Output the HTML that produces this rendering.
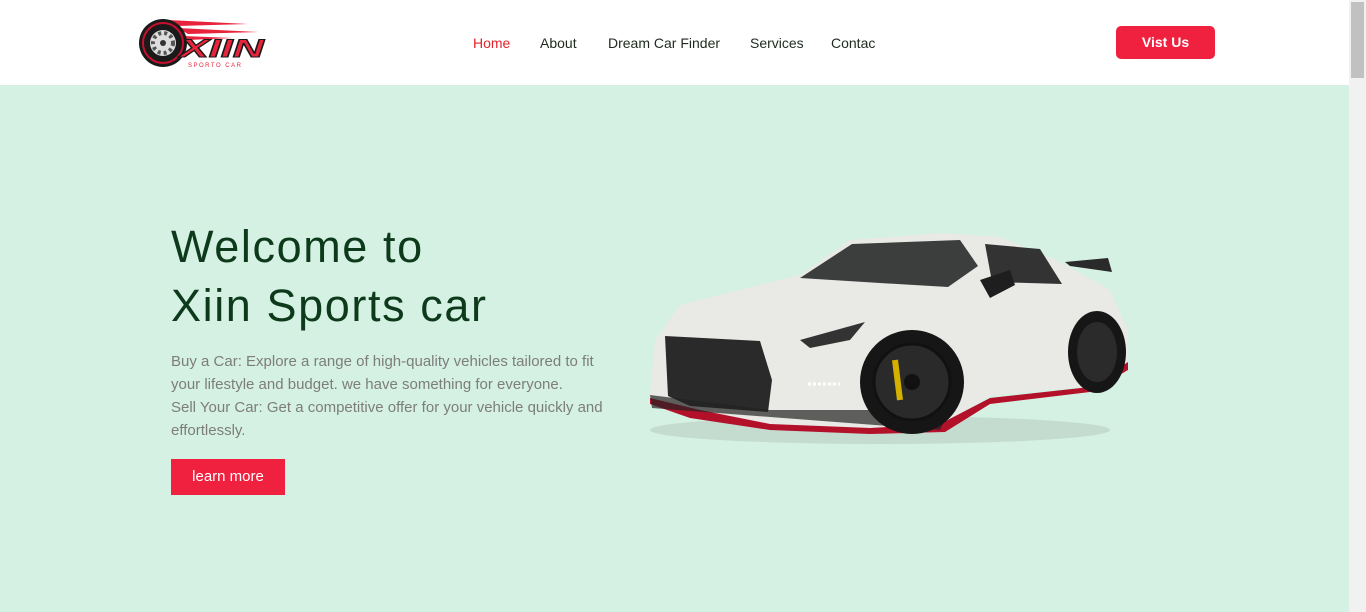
<!DOCTYPE html>
<html><head><meta charset="utf-8"><style>
*{margin:0;padding:0;box-sizing:border-box}
body{width:1366px;height:612px;overflow:hidden;background:#d5f1e3;font-family:"Liberation Sans",sans-serif;position:relative}
header{position:absolute;left:0;top:0;width:1349px;height:85px;background:#fff}
.nav{position:absolute;top:35px;font-size:14px;color:#1f2a1f}
.nav span{position:absolute;white-space:nowrap}
.visit{position:absolute;left:1116px;top:26px;width:99px;height:33px;background:#f0213f;border-radius:5px;color:#fff;font-weight:bold;font-size:14px;text-align:center;line-height:33px}
.sb{position:absolute;left:1349px;top:0;width:17px;height:612px;background:#f1f1f1}
.sb div{position:absolute;left:2px;top:2px;width:13px;height:76px;background:#c1c1c1}
h1{position:absolute;left:171px;top:217px;font-weight:normal;font-size:45px;line-height:59px;color:#0e3a1c;letter-spacing:1.6px}
p{position:absolute;left:171px;top:350px;width:450px;font-size:15px;line-height:23px;color:#7d7d7d}
.btn{position:absolute;left:171px;top:459px;width:114px;height:36px;background:#f0213f;color:#fff;font-size:15px;text-align:center;line-height:36px}
</style></head><body>
<header>
<svg style="position:absolute;left:138px;top:14px" width="130" height="58" viewBox="0 0 130 58">
<path d="M30 6 L110 10 L40 12Z" fill="#e8243c"/><path d="M40 14 L120 18 L50 20Z" fill="#e8243c"/><path d="M45 22 L95 24 L50 26Z" fill="#e8243c"/>
<circle cx="25" cy="29" r="24" fill="#1a1a1a"/><circle cx="25" cy="29" r="20" fill="none" stroke="#c8102e" stroke-width="2"/>
<circle cx="25" cy="29" r="13" fill="#ddd"/><circle cx="25" cy="29" r="10" fill="none" stroke="#555" stroke-width="4" stroke-dasharray="3 3"/><circle cx="25" cy="29" r="3" fill="#333"/>
<text x="42" y="43" font-family="Liberation Sans" font-weight="bold" font-style="italic" font-size="25" textLength="84" lengthAdjust="spacingAndGlyphs" fill="#e8243c" stroke="#1a1a1a" stroke-width="1">XIIN</text>
<text x="50" y="53" font-family="Liberation Sans" font-size="6" fill="#e8243c" letter-spacing="1.5">SPORTO CAR</text>
</svg>
<div class="nav"><span style="left:473px;color:#e3242b">Home</span><span style="left:540px">About</span><span style="left:608px">Dream Car Finder</span><span style="left:750px">Services</span><span style="left:831px">Contac</span></div>
<div class="visit">Vist Us</div>
</header>
<div class="sb"><div></div></div>
<h1>Welcome to<br>Xiin Sports car</h1>
<p>Buy a Car: Explore a range of high-quality vehicles tailored to fit your lifestyle and budget. we have something for everyone.<br>Sell Your Car: Get a competitive offer for your vehicle quickly and effortlessly.</p>
<div class="btn">learn more</div>
<svg style="position:absolute;left:0;top:0" width="1349" height="612">
<ellipse cx="880" cy="430" rx="230" ry="14" fill="#b8cfc2" opacity=".6"/>
<path d="M1065 262 L1108 258 L1112 272 L1070 266Z" fill="#2a2a2a"/>
<path d="M655 340 L680 305 L760 285 L800 275 L850 240 L940 233 L1000 237 L1060 262 L1110 290 L1128 330 L1128 362 L1090 386 L990 396 L940 425 L870 428 L770 425 L655 408 L650 396Z" fill="#e9e9e6"/>
<path d="M800 278 L852 244 L960 240 L978 266 L948 287 L880 283Z" fill="#3b3e3d"/>
<path d="M985 244 L1040 249 L1062 284 L992 282Z" fill="#333"/>
<path d="M980 280 L1010 270 L1015 285 L990 298Z" fill="#1e1e1e"/>
<path d="M665 336 L760 341 L772 380 L768 412 L690 406 L668 396Z" fill="#2a2a2a"/>
<path d="M800 340 L865 322 L850 340 L810 348Z" fill="#333"/>
<path d="M650 398 L700 410 L770 424 L870 428 L940 424 L990 398 L1090 387 L1128 362 L1128 370 L1090 392 L990 404 L945 432 L870 434 L770 430 L690 418 L650 404Z" fill="#b3102a"/>
<path d="M650 395 L652 408 L940 430 L950 410 L770 410Z" fill="#222" opacity=".7"/>
<circle cx="912" cy="382" r="52" fill="#161616"/><circle cx="912" cy="382" r="38" fill="#2a2a2a" stroke="#111" stroke-width="3"/><circle cx="912" cy="382" r="8" fill="#111"/>
<path d="M895 360 L900 400" stroke="#d4b000" stroke-width="6"/>
<ellipse cx="1097" cy="352" rx="29" ry="41" fill="#161616"/><ellipse cx="1097" cy="352" rx="20" ry="30" fill="#2b2b2b"/>
<path d="M808 384 L840 384" stroke="#fff" stroke-width="3" stroke-dasharray="3 2"/>
</svg>
</body></html>
